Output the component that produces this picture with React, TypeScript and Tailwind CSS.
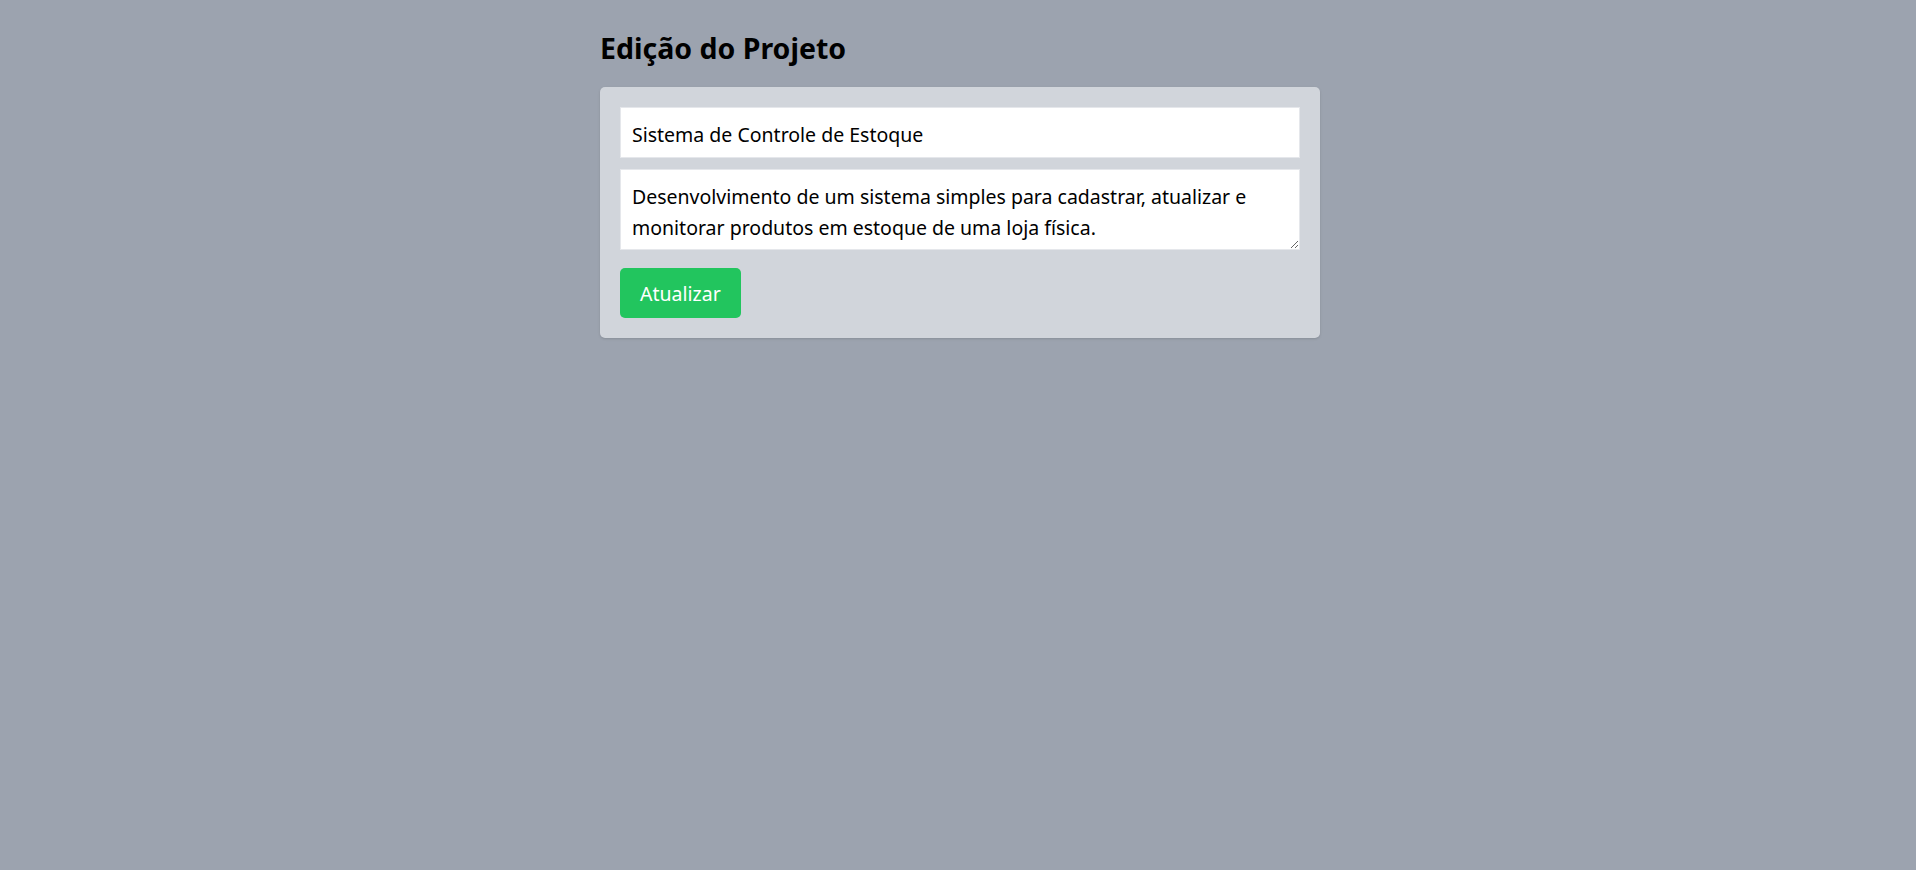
import React, { useState } from 'react';

const App = () => {
  const [titulo, setTitulo] = useState('Sistema de Controle de Estoque');
  const [descricao, setDescricao] = useState(
    'Desenvolvimento de um sistema simples para cadastrar, atualizar e monitorar produtos em estoque de uma loja física.'
  );

  const handleSubmit = (e: React.FormEvent<HTMLFormElement>) => {
    e.preventDefault();
  };

  return (
    <div className="min-h-screen bg-[#9ca3af] pt-[31px] font-['Noto_Sans',sans-serif] text-black">
      <div className="w-[724px] mx-auto pl-1">
        <h1 className="text-[28.5px] leading-[35px] font-bold mb-[21px]">Edição do Projeto</h1>
        <form className="bg-[#d1d5db] rounded-[5px] shadow p-5 flex flex-col" onSubmit={handleSubmit}>
          <input
            type="text"
            value={titulo}
            onChange={(e) => setTitulo(e.target.value)}
            className="w-full h-[51px] px-[11px] pt-[4px] bg-white border border-[#e5e7eb] text-[19.5px] leading-[31px] outline-none"
          />
          <textarea
            value={descricao}
            onChange={(e) => setDescricao(e.target.value)}
            rows={2}
            className="w-full h-[81px] mt-[11px] px-[11px] pt-[11px] pb-[7px] bg-white border border-[#e5e7eb] text-[19.5px] leading-[31px] outline-none"
          />
          <div className="mt-[18px]">
            <button type="submit" className="bg-[#22c55e] text-white text-[19.5px] leading-[30px] px-5 pt-[11px] pb-[9px] rounded-[5px]">
              Atualizar
            </button>
          </div>
        </form>
      </div>
    </div>
  );
};

export default App;
